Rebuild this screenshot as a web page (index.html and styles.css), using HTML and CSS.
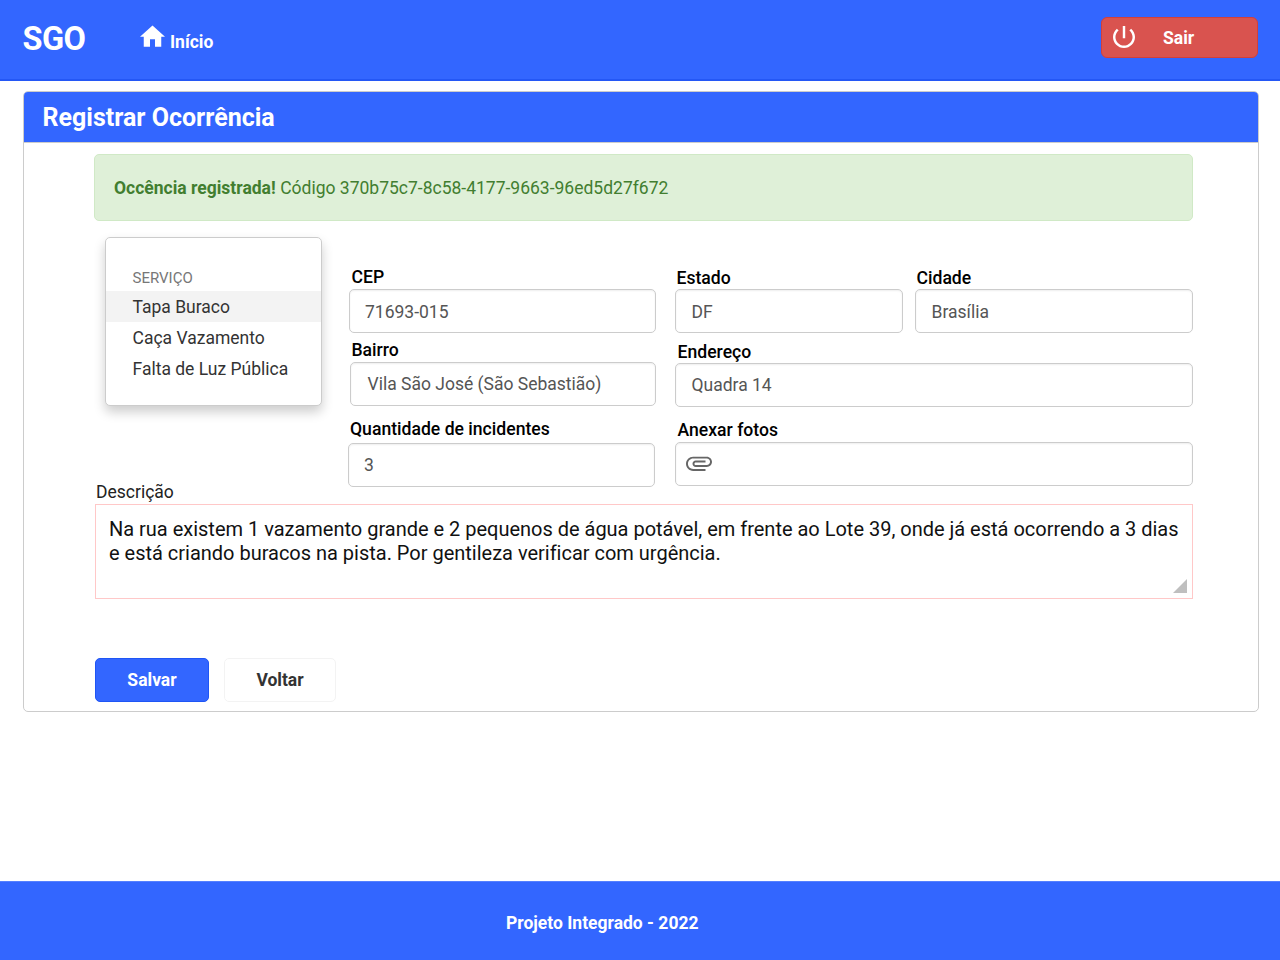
FILE: index.html
```html
<!DOCTYPE html>
<html lang="pt-BR">
<head>
<meta charset="utf-8">
<title>SGO - Registrar Ocorrência</title>
<link rel="stylesheet" href="styles.css">
</head>
<body>
<header class="topbar">
  <span class="brand">SGO</span>
  <nav class="nav">
    <svg class="home" viewBox="2 3 20 17"><path fill="#fff" d="M10 20v-6h4v6h5v-8h3L12 3 2 12h3v8z"/></svg>
    <span class="nav-text">Início</span>
  </nav>
  <button class="logout">
    <svg class="power" viewBox="3 3 18 18"><path fill="#fff" d="M13 3h-2v10h2V3zm4.83 2.17l-1.42 1.42C17.99 7.86 19 9.81 19 12c0 3.87-3.13 7-7 7s-7-3.13-7-7c0-2.19 1.01-4.14 2.58-5.42L6.17 5.17C4.23 6.82 3 9.26 3 12c0 4.97 4.03 9 9 9s9-4.03 9-9c0-2.74-1.23-5.18-3.17-6.83z"/></svg>
    <span class="logout-text">Sair</span>
  </button>
</header>
<main class="card">
  <h1 class="card-title"><span class="title-text">Registrar Ocorrência</span></h1>
  <div class="card-body">
    <div class="alert"><b class="alert-strong">Occência registrada!</b><span class="alert-code">Código 370b75c7-8c58-4177-9663-96ed5d27f672</span></div>
    <div class="fields">
      <div class="menu">
        <div class="menu-head"><span class="head-text">SERVIÇO</span></div>
        <div class="menu-item active"><span class="item-a">Tapa Buraco</span></div>
        <div class="menu-item"><span class="item-b">Caça Vazamento</span></div>
        <div class="menu-item"><span class="item-c">Falta de Luz Pública</span></div>
      </div>
      <div class="col-left">
        <div class="field cep"><label><span class="l-cep">CEP</span></label><div class="input"><span class="v-cep">71693-015</span></div></div>
        <div class="field bairro"><label><span class="l-bairro">Bairro</span></label><div class="input"><span class="v-bairro">Vila São José (São Sebastião)</span></div></div>
        <div class="field quant"><label><span class="l-quant">Quantidade de incidentes</span></label><div class="input"><span class="v-quant">3</span></div></div>
      </div>
      <div class="col-right">
        <div class="pair">
          <div class="field estado"><label><span class="l-estado">Estado</span></label><div class="input"><span class="v-df">DF</span></div></div>
          <div class="field cidade"><label><span class="l-cidade">Cidade</span></label><div class="input"><span class="v-cidade">Brasília</span></div></div>
        </div>
        <div class="field endereco"><label><span class="l-endereco">Endereço</span></label><div class="input"><span class="v-endereco">Quadra 14</span></div></div>
        <div class="field anexar"><label><span class="l-anexar">Anexar fotos</span></label><div class="input file">
          <svg class="clip" viewBox="2 5 20 13"><path fill="#666" d="M2 12.5C2 9.46 4.46 7 7.5 7H18c2.21 0 4 1.79 4 4s-1.79 4-4 4H9.5C8.12 15 7 13.88 7 12.5S8.12 10 9.5 10H17v1.5H9.41c-.55 0-.91.45-.91 1s.36 1 .91 1H18c1.38 0 2.5-1.12 2.5-2.5S19.38 8.500 18 8.500H7.500c-2.210 0-4 1.790-4 4s1.790 4 4 4H17V18H7.500C4.460 18 2 15.540 2 12.500z"/></svg>
        </div></div>
      </div>
    </div>
    <div class="desc-label"><span class="desc-text">Descrição</span></div>
    <div class="textarea">
      <p class="line"><span class="line-a">Na rua existem 1 vazamento grande e 2 pequenos de água potável, em frente ao Lote 39, onde já está ocorrendo a 3 dias</span></p>
      <p class="line"><span class="line-b">e está criando buracos na pista. Por gentileza verificar com urgência.</span></p>
      <svg class="grip" viewBox="0 0 14 14"><path fill="#bfbfbf" d="M14 0v14H0z"/></svg>
    </div>
    <div class="actions">
      <button class="btn save"><span class="save-text">Salvar</span></button>
      <button class="btn back"><span class="back-text">Voltar</span></button>
    </div>
  </div>
</main>
<footer class="footer"><span class="footer-text">Projeto Integrado - 2022</span></footer>
</body>
</html>
```

FILE: styles.css
```css
* { box-sizing: border-box; }
body { margin: 0; height: 960px; display: flex; flex-direction: column; background: #fff; font-family: Roboto, sans-serif; font-size: 17.5px; overflow: hidden; }
button { font-family: inherit; font-size: inherit; margin: 0; }
span { white-space: nowrap; }
p { margin: 0; }
svg { display: block; flex: none; }

.topbar { height: 81px; flex: none; display: flex; align-items: flex-start; background: #36f; border-bottom: 2px solid #2457f5; padding: 0 22px 0 22.5px; }
.brand { width: 117.5px; margin-top: 19px; line-height: 41px; font-size: 32.5px; font-weight: 700; color: #fff; letter-spacing: -.6px; }
.nav { display: flex; color: #fff; font-weight: 700; }
.home { width: 25px; height: 22px; margin-top: 25px; }
.nav-text { margin: 32px 0 0 5px; line-height: 20px; }
.logout { margin: 17px 0 0 auto; width: 157px; height: 41px; padding: 0 0 0 11px; display: flex; align-items: center; background: #d9534f; border: 1px solid #d43f3a; border-radius: 6px; color: #fff; font-weight: 700; }
.power { width: 22px; height: 22px; margin-bottom: 2px; }
.logout-text { margin-left: 28px; }

.card { margin: 10px 21px 0 23px; height: 621px; flex: none; border: 1px solid #ccc; border-radius: 5px; overflow: hidden; }
.card-title { margin: 0; height: 51px; padding: 0 18.5px; background: #36f; border-bottom: 1px solid #ccc; color: #fff; font-size: 25px; line-height: 51px; font-weight: 700; }
.card-body { padding: 11px 65px 0 70px; }
.alert { height: 67px; display: flex; align-items: center; gap: 4.500px; padding-left: 19px; background: #dff0d8; border: 1px solid #d0e9c6; border-radius: 5px; color: #427e30; }
.alert-strong { font-weight: 700; white-space: nowrap; }

.fields { display: flex; align-items: flex-start; margin-top: 16px; padding-left: 11px; }
.menu { width: 217px; height: 169px; flex: none; padding-top: 27px; background: #fff; border: 1px solid #ccc; border-radius: 5px; box-shadow: 0 6px 12px rgba(0,0,0,.2); color: #333; }
.menu-head { height: 26px; padding-left: 26.5px; line-height: 27px; font-size: 15px; color: #777; }
.menu-item { height: 31px; padding-left: 26.5px; line-height: 33px; }
.menu-item.active { background: #f3f3f3; }
.col-left { width: 308px; margin-left: 26px; padding-top: 29px; }
.col-right { width: 518px; margin-left: 19px; padding-top: 30px; }
.field label { display: block; height: 20px; line-height: 22px; font-size: 17.6px; font-weight: 500; color: #000; padding-left: 2.5px; }
.input { height: 44px; display: flex; align-items: center; padding: 0 0 1px 15.500px; background: #fff; border: 1px solid #ccc; border-radius: 5px; box-shadow: inset 0 1px 2px rgba(0,0,0,.07); color: #555; }
.cep { margin-left: 1px; }
.cep label { margin-bottom: 3px; }
.cep .input { padding: 1px 0 0 15px; }
.bairro { margin: 7px 0 0 2px; }
.bairro label { margin-bottom: 2px; padding-left: 1.500px; line-height: 21px; }
.bairro .input { padding-left: 16.500px; }
.quant { margin: 12px 1px 0 0; }
.quant label { margin-bottom: 5px; padding-left: 2px; }
.quant .input { padding-left: 15px; }
.pair { display: flex; gap: 12px; }
.pair .input { padding: 1px 0 0 15.500px; }
.estado { width: 228px; }
.cidade { flex: 1; }
.pair label, .endereco label { margin-bottom: 2px; }
.pair label { padding-left: 1.500px; }
.endereco { margin-top: 8px; }
.anexar { margin-top: 12px; }
.anexar label { margin-bottom: 3px; }
.input.file { padding: 0 0 4px 10px; }
.clip { width: 26px; height: 17px; }

.desc-label { height: 20px; margin-top: -6px; padding-left: 2px; line-height: 22px; color: #222; }
.textarea { position: relative; height: 95px; margin: 3px 0 0 1px; padding: 12px 0 0 13px; border: 1px solid #ffc8c8; background: #fff; color: #111; font-size: 20px; letter-spacing: -.01px; }
.line { height: 24px; line-height: 24px; }
.grip { position: absolute; right: 5px; bottom: 5px; width: 14px; height: 14px; }
.actions { display: flex; gap: 15px; margin: 59px 0 0 1px; }
.btn { height: 44px; padding: 0 0 1px; border-radius: 5px; text-align: center; font-weight: 700; }
.save { width: 114px; background: #36f; border: 1px solid #1f55f5; color: #fff; }
.back { width: 112px; background: #fff; border: 1px solid #f3f3f3; color: #333; }
.footer { margin-top: auto; height: 79px; flex: none; padding: 31px 0 0 506px; background: #36f; border-top: 1px solid #5580ff; color: #fff; font-weight: 700; line-height: 21px; }
```
